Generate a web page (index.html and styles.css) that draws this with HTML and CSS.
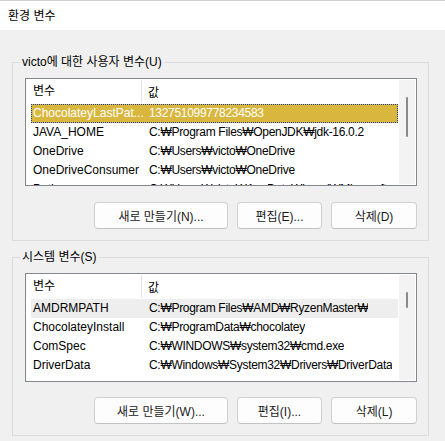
FILE: index.html
```html
<!DOCTYPE html>
<html lang="ko">
<head>
<meta charset="utf-8">
<title>환경 변수</title>
<link rel="stylesheet" href="styles.css">
</head>
<body>
<div class="titlebar">환경 변수</div>
<div class="content">
  <fieldset class="group group-user">
    <legend>victo에 대한 사용자 변수(U)</legend>
    <div class="listview">
      <div class="lv-body">
        <div class="lv-header"><span class="h1">변수</span><span class="h2">값</span></div>
        <div class="lv-row selected"><span class="c1">ChocolateyLastPat...</span><span class="c2">132751099778234583</span></div>
        <div class="lv-row"><span class="c1">JAVA_HOME</span><span class="c2">C:₩Program Files₩OpenJDK₩jdk-16.0.2</span></div>
        <div class="lv-row"><span class="c1">OneDrive</span><span class="c2">C:₩Users₩victo₩OneDrive</span></div>
        <div class="lv-row"><span class="c1">OneDriveConsumer</span><span class="c2">C:₩Users₩victo₩OneDrive</span></div>
        <div class="lv-row"><span class="c1">Path</span><span class="c2">C:₩Users₩victo₩AppData₩Local₩Microsoft</span></div>
      </div>
      <div class="scrollbar"><div class="thumb thumb-user"></div></div>
    </div>
    <div class="buttons">
      <button class="btn btn-new">새로 만들기(N)...</button>
      <button class="btn btn-edit">편집(E)...</button>
      <button class="btn btn-del">삭제(D)</button>
    </div>
  </fieldset>

  <fieldset class="group group-system">
    <legend>시스템 변수(S)</legend>
    <div class="listview listview-system">
      <div class="lv-body">
        <div class="lv-header"><span class="h1">변수</span><span class="h2">값</span></div>
        <div class="lv-row hover"><span class="c1">AMDRMPATH</span><span class="c2">C:₩Program Files₩AMD₩RyzenMaster₩</span></div>
        <div class="lv-row"><span class="c1">ChocolateyInstall</span><span class="c2">C:₩ProgramData₩chocolatey</span></div>
        <div class="lv-row"><span class="c1">ComSpec</span><span class="c2">C:₩WINDOWS₩system32₩cmd.exe</span></div>
        <div class="lv-row"><span class="c1">DriverData</span><span class="c2">C:₩Windows₩System32₩Drivers₩DriverData</span></div>
      </div>
      <div class="scrollbar"><div class="thumb thumb-system"></div></div>
    </div>
    <div class="buttons buttons-system">
      <button class="btn btn-new">새로 만들기(W)...</button>
      <button class="btn btn-edit">편집(I)...</button>
      <button class="btn btn-del">삭제(L)</button>
    </div>
  </fieldset>
</div>
</body>
</html>
```
FILE: styles.css
```css
* { box-sizing: border-box; }

html, body {
  margin: 0;
  padding: 0;
}

body {
  width: 445px;
  height: 441px;
  overflow: hidden;
  background: #f0f0f0;
  font-family: "Liberation Sans", "Noto Sans CJK KR", sans-serif;
  font-size: 12px;
  color: #000;
}

.titlebar {
  height: 30px;
  line-height: 30px;
  padding-left: 8px;
  background: #ffffff;
  border-top: 1px solid #cfcfcf;
  font-size: 12px;
  color: #000;
}

.content {
  padding: 0 16px 0 12px;
}

.group {
  margin: 0;
  padding: 8px 11px 11px 12px;
  border: 1px solid #dcdcdc;
  min-inline-size: 0;
  width: 417px;
}

.group-user { margin-top: 24px; }
.group-system { margin-top: 8px; }

.group legend {
  padding: 0 2px;
  margin-left: -5px;
  line-height: 16px;
  height: 16px;
  color: #000;
}

.listview {
  display: flex;
  height: 108px;
  border: 1px solid #828790;
  background: #ffffff;
  overflow: hidden;
}

.listview-system { height: 109px; }

.lv-body {
  flex: 1;
  min-width: 0;
  padding-left: 5px;
  overflow: hidden;
}

.lv-header {
  display: flex;
  height: 25px;
  align-items: center;
}

.lv-header .h1 {
  width: 111px;
  padding-left: 2px;
  height: 23px;
  line-height: 23px;
  border-right: 1px solid #e5e5e5;
}

.lv-header .h2 {
  padding-left: 6px;
}

.lv-row {
  display: flex;
  height: 19px;
  line-height: 19px;
  white-space: nowrap;
}

.lv-row .c1 {
  width: 112px;
  flex: none;
  padding-left: 2px;
  overflow: hidden;
}

.lv-row .c2 {
  padding-left: 6px;
  overflow: hidden;
  letter-spacing: -0.3px;
}

.lv-row.selected {
  background: #d9b73e;
  color: #ffffff;
  outline: 1px dotted #2340a0;
  outline-offset: -1px;
}

.lv-row.hover {
  background: #eeeeee;
}

.scrollbar {
  width: 16px;
  flex: none;
  margin: 1px 1px 1px 1px;
  background: #f3f3f3;
}

.thumb {
  width: 2px;
  margin-left: 7px;
  background: #8a8a8a;
  border-radius: 1px;
}

.thumb-user { margin-top: 17px; height: 40px; }
.thumb-system { margin-top: 17px; height: 16px; }

.buttons {
  display: flex;
  justify-content: flex-end;
  gap: 9px;
  margin-top: 16px;
}

.buttons-system { margin-top: 15px; }

.btn {
  height: 27px;
  padding: 0;
  font-family: inherit;
  font-size: 12px;
  color: #1a1a1a;
  background: #fdfdfd;
  border: 1px solid #d0d0d0;
  border-bottom-color: #c2c2c2;
  border-radius: 4px;
}

.btn-new { width: 134px; }
.btn-edit { width: 85px; }
.btn-del { width: 86px; }
```
